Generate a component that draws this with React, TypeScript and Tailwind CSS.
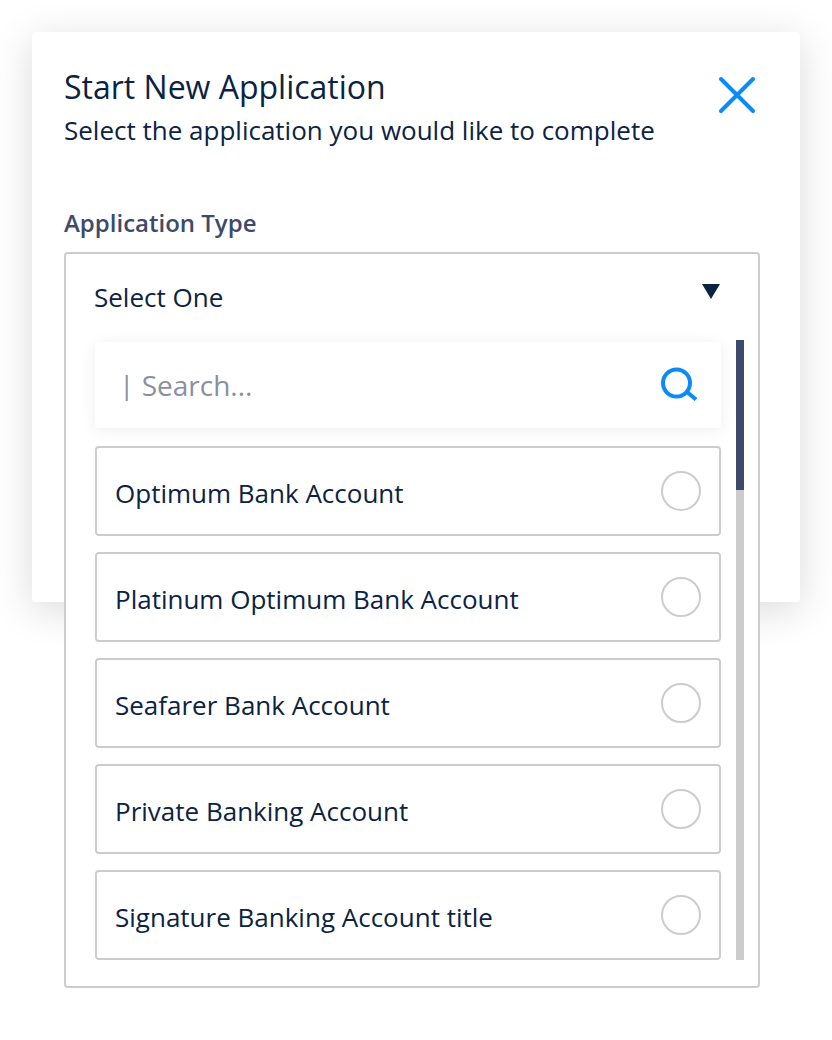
import React, { useState } from 'react';

const accountTypes = [
  'Optimum Bank Account',
  'Platinum Optimum Bank Account',
  'Seafarer Bank Account',
  'Private Banking Account',
  'Signature Banking Account title',
];

const CloseIcon = () => (
  <svg className="size-10" viewBox="0 0 40 40" fill="none" aria-hidden="true">
    <path d="M4 4l32 32M36 4L4 36" stroke="#0a8bf8" strokeWidth="4" strokeLinecap="round" />
  </svg>
);

const SearchIcon = () => (
  <svg className="size-9 shrink-0" viewBox="0 0 36 36" fill="none" aria-hidden="true">
    <circle cx="15.5" cy="16" r="13.5" stroke="#0a8bf8" strokeWidth="4" />
    <path d="M26 25l9 7.5" stroke="#0a8bf8" strokeWidth="4" />
  </svg>
);

const ArrowIcon = () => (
  <svg className="mb-3 h-[15px] w-[18px]" viewBox="0 0 18 15" aria-hidden="true">
    <path d="M0 0h18L9 15z" fill="#0b2343" />
  </svg>
);

interface AccountOptionProps {
  name: string;
  checked: boolean;
  onSelect: (name: string) => void;
}

const AccountOption: React.FC<AccountOptionProps> = ({ name, checked, onSelect }) => (
  <label className="flex h-[90px] cursor-pointer items-center justify-between rounded border-2 border-[#ccc] px-[18px]">
    <span className="pt-1 text-[26px] leading-8">{name}</span>
    <input
      type="radio"
      name="account"
      value={name}
      checked={checked}
      onChange={() => onSelect(name)}
      className="size-10 shrink-0 appearance-none rounded-full border-2 border-[#ccc] checked:border-[12px] checked:border-[#0a8bf8]"
    />
  </label>
);

export default function App() {
  const [open, setOpen] = useState(true);
  const [query, setQuery] = useState('');
  const [selected, setSelected] = useState('');

  const visible = accountTypes.filter((name) => name.toLowerCase().includes(query.toLowerCase()));

  return (
    <main className="min-h-screen bg-white p-8 font-['Open_Sans',sans-serif] text-[#0b2343]">
      <section className="rounded bg-white pt-8 pr-10 pb-[260px] pl-8 shadow-[0_8px_40px_rgba(0,0,0,0.15)]">
        {/* Title and close button */}
        <header className="flex items-start justify-between">
          <div>
            <h1 className="text-[32px] leading-[46px]">Start New Application</h1>
            <p className="text-[26px] leading-10">Select the application you would like to complete</p>
          </div>
          <button type="button" aria-label="Close" className="mt-[11px] mr-[3px] cursor-pointer">
            <CloseIcon />
          </button>
        </header>

        <div id="type-label" className="mt-14 mb-3 text-2xl leading-[34px] font-semibold text-[#3e4a6b]">
          Application Type
        </div>

        {/* The open list hangs over the bottom of the card */}
        <div className="relative h-[90px]">
          <div className="absolute inset-x-0 top-0 rounded border-2 border-[#ccc] bg-white">
            <button
              type="button"
              aria-expanded={open}
              aria-labelledby="type-label type-value"
              onClick={() => setOpen(!open)}
              className="flex h-[86px] w-full cursor-pointer items-center justify-between pr-[38px] pl-7"
            >
              <span id="type-value" className="text-[26px] leading-8">{selected || 'Select One'}</span>
              <ArrowIcon />
            </button>

            {open && (
              <div className="flex gap-[15px] pr-3.5 pb-[26px] pl-[29px]">
                <div className="min-w-0 flex-1 pt-0.5">
                  <div className="mb-[18px] flex h-[86px] items-center rounded bg-white px-6 shadow-[0_2px_16px_rgba(0,0,0,0.07)]">
                    <input
                      type="text"
                      aria-label="Search"
                      placeholder="| Search..."
                      value={query}
                      onChange={(e) => setQuery(e.target.value)}
                      className="min-w-0 flex-1 text-[28px] leading-8 outline-none placeholder:text-[#8a8f9f]"
                    />
                    <SearchIcon />
                  </div>
                  <div className="flex flex-col gap-4">
                    {visible.map((name) => (
                      <AccountOption key={name} name={name} checked={selected === name} onSelect={setSelected} />
                    ))}
                  </div>
                </div>

                {/* Scroll track */}
                <div className="w-2 bg-[#ccc]">
                  <div className="h-[150px] bg-[#3e4a6b]" />
                </div>
              </div>
            )}
          </div>
        </div>
      </section>
    </main>
  );
}
